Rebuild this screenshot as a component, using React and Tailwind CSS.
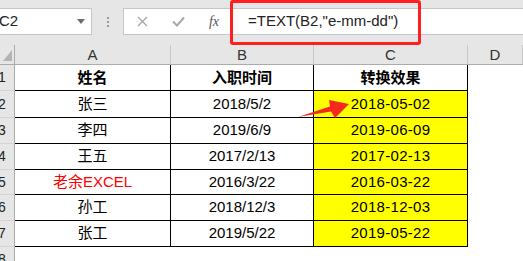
import React from "react";

const rows = [
  { name: "张三", date: "2018/5/2", out: "2018-05-02" },
  { name: "李四", date: "2019/6/9", out: "2019-06-09" },
  { name: "王五", date: "2017/2/13", out: "2017-02-13" },
  { name: "老余EXCEL", date: "2016/3/22", out: "2016-03-22", red: true },
  { name: "孙工", date: "2018/12/3", out: "2018-12-03" },
  { name: "张工", date: "2019/5/22", out: "2019-05-22" },
];

const font = "font-['Liberation_Sans','Noto_Sans_CJK_SC',sans-serif]";

function RowHead({ n }) {
  return (
    <div className="bg-[#e6e6e6] border-r border-b border-r-[#ababab] border-b-[#d4d4d4] overflow-hidden flex items-center">
      <div className="ml-[-20px] w-[44px] shrink-0 text-center text-[14px] text-[#222]">{n}</div>
    </div>
  );
}

function Cell({ children, className = "" }) {
  return (
    <div className={`border-r border-b border-black flex items-center justify-center text-[15px] ${className}`}>
      {children}
    </div>
  );
}

export default function App() {
  return (
    <div className={`relative w-[523px] h-[261px] overflow-hidden bg-white ${font}`}>
      {/* Formula bar */}
      <div className="h-[45px] bg-[#e6e6e6] flex items-start pt-[8px]">
        <div className="w-[92px] h-[27px] shrink-0 bg-white border border-l-0 border-[#c6c6c6] flex items-center justify-between">
          <span className="ml-[-1px] text-[15px] text-[#222]">C2</span>
          <span className="mr-[6px] w-0 h-0 border-l-[4px] border-r-[4px] border-t-[5px] border-l-transparent border-r-transparent border-t-[#6b6b6b]" />
        </div>
        <div className="w-[31px] h-[27px] shrink-0 flex flex-col items-center justify-center gap-[2px]">
          <span className="w-[2px] h-[2px] bg-[#9a9a9a]" />
          <span className="w-[2px] h-[2px] bg-[#9a9a9a]" />
          <span className="w-[2px] h-[2px] bg-[#9a9a9a]" />
        </div>
        <div className="w-[107px] h-[27px] shrink-0 bg-white border border-r-0 border-[#c6c6c6] flex items-center overflow-hidden">
          <div className="w-[36px] shrink-0 flex justify-center">
            <svg width="11" height="11" viewBox="0 0 11 11">
              <path d="M1 1 L10 10 M10 1 L1 10" stroke="#a8a8a8" strokeWidth="1.4" fill="none" />
            </svg>
          </div>
          <div className="w-[36px] shrink-0 flex justify-center">
            <svg width="13" height="11" viewBox="0 0 13 11">
              <path d="M1 5.5 L5 9.5 L12 1.5" stroke="#a8a8a8" strokeWidth="2" fill="none" />
            </svg>
          </div>
          <div className="w-[36px] shrink-0 flex justify-center">
            <span className="font-['Liberation_Serif',serif] italic text-[14px] text-[#555]">fx</span>
          </div>
        </div>
        <div className="flex-1 h-[27px] bg-white border border-r-0 border-[#c6c6c6] flex items-center pl-[17px]">
          <span className="text-[15px] text-[#222]">=TEXT(B2,"e-mm-dd")</span>
        </div>
      </div>

      {/* Sheet */}
      <div className="grid grid-cols-[15px_156px_143px_154px_1fr] grid-rows-[20px_26px_27px_26px_26px_25px_26px_26px_26px]">
        <div className="bg-[#e6e6e6] border-r border-b border-r-[#ababab] border-b-[#ababab] relative">
          <span className="absolute left-[3px] top-[5px] w-0 h-0 border-l-[9px] border-b-[11px] border-l-transparent border-b-[#b4b4b4]" />
        </div>
        {["A", "B", "C", "D"].map((c) => (
          <div key={c} className="bg-[#e6e6e6] border-r border-b border-r-[#c8c8c8] border-b-[#ababab] flex items-center justify-center text-[15px] text-[#333] pt-[2px]">
            {c}
          </div>
        ))}

        <RowHead n={1} />
        <Cell className="font-bold font-['Noto_Sans_CJK_SC',sans-serif]">姓名</Cell>
        <Cell className="font-bold font-['Noto_Sans_CJK_SC',sans-serif]">入职时间</Cell>
        <Cell className="font-bold font-['Noto_Sans_CJK_SC',sans-serif]">转换效果</Cell>
        <div />

        {rows.map((r, i) => (
          <React.Fragment key={i}>
            <RowHead n={i + 2} />
            <Cell className={r.red ? "text-[#ff0000]" : "text-black"}>{r.name}</Cell>
            <Cell>{r.date}</Cell>
            <Cell className="bg-[#ffff00] tracking-[0.3px]">{r.out}</Cell>
            <div />
          </React.Fragment>
        ))}

        <RowHead n={8} />
        <div />
        <div />
        <div />
        <div />
      </div>

      {/* Annotations */}
      <div className="absolute left-[230px] top-0 w-[191px] h-[45px] border-[3px] border-[#ff1f1f] rounded-[3px]" />
      <svg className="absolute left-0 top-0" width="523" height="261">
        <polygon points="298,117 330,106.5 329,100 349,104 335,118 331,111.5" fill="#f5281c" />
      </svg>
    </div>
  );
}
